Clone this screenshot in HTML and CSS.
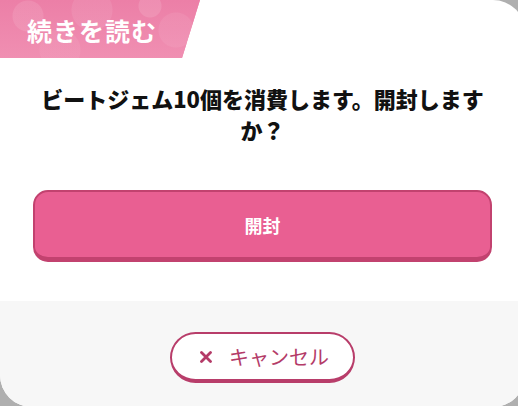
FILE: index.html
```html
<!DOCTYPE html>
<html lang="ja">
<head>
    <meta charset="UTF-8">
    <meta name="viewport" content="width=device-width, initial-scale=1.0">
    <title>続きを読む</title>
    <link rel="stylesheet" href="styles.css">
</head>
<body>
    <div class="dialog">
        <div class="dialog-tab">
            <span class="dialog-title">続きを読む</span>
        </div>

        <div class="dialog-body">
            <p class="message">ビートジェム10個を消費します。開封しますか？</p>
            <button class="btn-open">開封</button>
        </div>

        <div class="dialog-footer">
            <button class="btn-cancel">
                <svg class="cancel-mark" width="12" height="12" viewBox="0 0 12 12">
                    <path d="M1.5 1.5 L10.5 10.5 M10.5 1.5 L1.5 10.5" stroke="currentColor" stroke-width="2.8" stroke-linecap="round"/>
                </svg>
                キャンセル
            </button>
        </div>
    </div>
</body>
</html>
```

FILE: styles.css
```css
/* Base */
body {
    margin: 0;
    height: 406px;
    overflow: hidden;
    background-color: #afafaf;
    font-family: "Noto Sans CJK JP", "Noto Sans", sans-serif;
    color: #111;
}

/* Ventana del diálogo */
.dialog {
    width: 525px;
    height: 407px;
    background-color: #ffffff;
    border-radius: 0 32px 32px 32px;
    overflow: hidden;
    display: flex;
    flex-direction: column;
}

/* Pestaña rosa del título */
.dialog-tab {
    width: 200px;
    height: 58px;
    clip-path: polygon(0 0, 200px 0, 182px 58px, 0 58px);
    background-color: #ee88ad;
    background-image:
        radial-gradient(circle at 28px 16px, rgba(255, 255, 255, 0.1) 0 15px, transparent 16px),
        radial-gradient(circle at 92px 10px, rgba(255, 255, 255, 0.08) 0 20px, transparent 21px),
        radial-gradient(circle at 150px 6px, rgba(255, 255, 255, 0.12) 0 11px, transparent 12px),
        radial-gradient(circle at 176px 30px, rgba(255, 255, 255, 0.07) 0 17px, transparent 18px),
        radial-gradient(circle at 60px 50px, rgba(255, 255, 255, 0.06) 0 20px, transparent 21px),
        linear-gradient(180deg, #ec7fa7 0%, #f08fb2 100%);
    display: flex;
    align-items: center;
    padding-left: 27px;
    box-sizing: border-box;
}

.dialog-title {
    color: #ffffff;
    font-size: 25px;
    font-weight: 700;
    letter-spacing: 1px;
    margin-top: 2px;
}

/* Cuerpo */
.dialog-body {
    padding: 0 33px;
    flex: 1;
}

.message {
    margin: 25px 0 0;
    font-size: 22px;
    line-height: 31px;
    font-weight: 900;
    text-align: center;
}

.btn-open {
    display: block;
    width: 100%;
    height: 72px;
    margin-top: 45px;
    background-color: #e95f92;
    color: #ffffff;
    border: 2px solid #c2426f;
    border-bottom-width: 5px;
    border-radius: 15px;
    font-family: inherit;
    font-size: 18px;
    font-weight: 700;
    cursor: pointer;
}

/* Pie gris */
.dialog-footer {
    height: 106px;
    background-color: #f7f7f7;
    display: flex;
    justify-content: center;
    padding-top: 31px;
    box-sizing: border-box;
}

.btn-cancel {
    width: 185px;
    height: 51px;
    background-color: #ffffff;
    color: #b43b68;
    border: 2px solid #b83d6a;
    border-bottom-width: 4px;
    border-radius: 26px;
    font-family: inherit;
    font-size: 20px;
    font-weight: 400;
    display: flex;
    align-items: center;
    justify-content: center;
    cursor: pointer;
    padding: 0 0 0 4px;
}

.cancel-mark {
    margin-right: 17px;
}
```
